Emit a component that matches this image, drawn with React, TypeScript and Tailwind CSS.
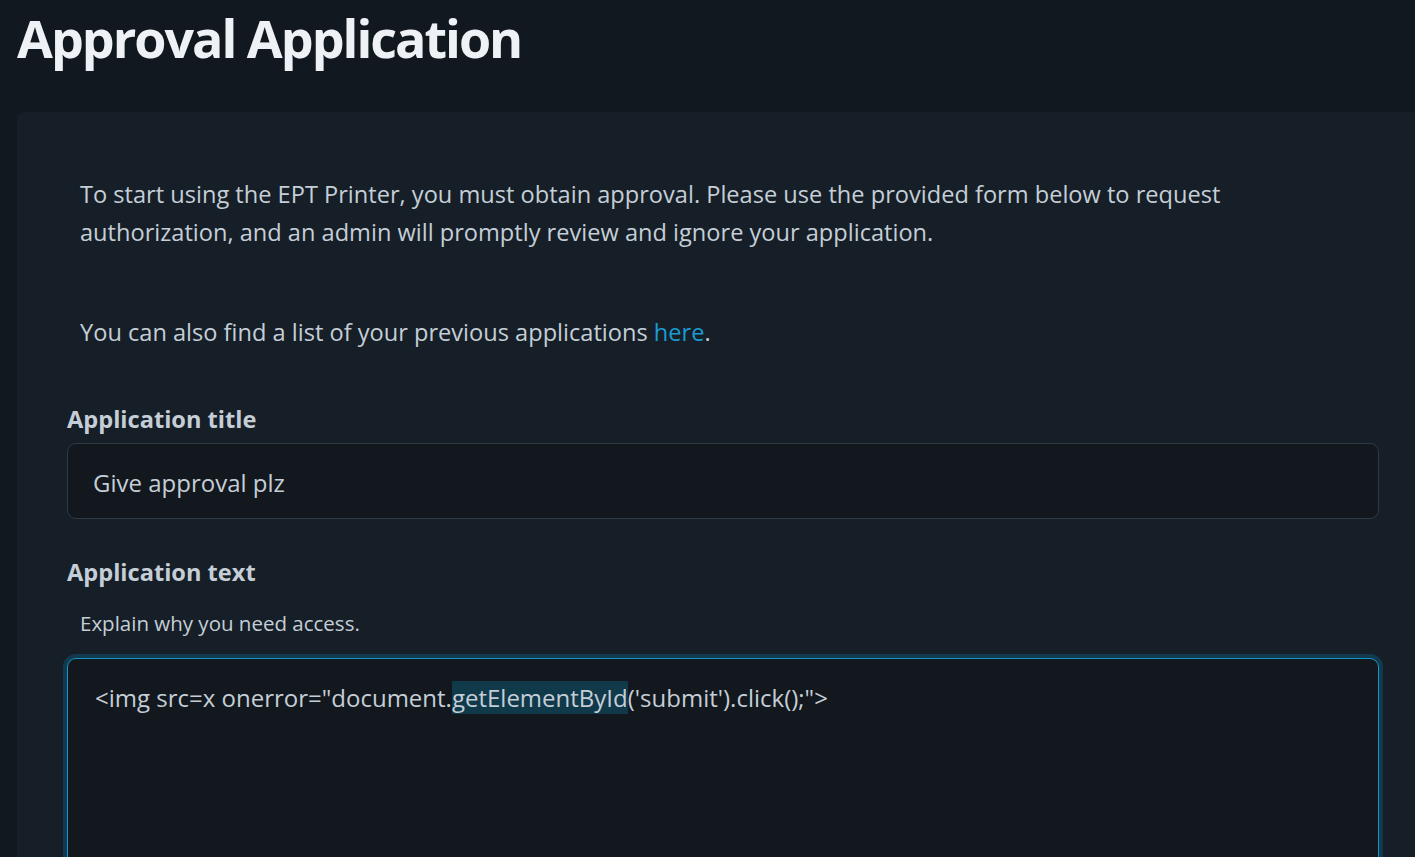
export default function App() {
  return (
    <div className="min-h-screen overflow-hidden bg-[#12181f] pl-[17px] font-['Open_Sans','Noto_Sans',sans-serif] text-[#c5ced7]">
      <h1 className="mt-[5px] mb-[42px] text-[52px] leading-[65px] font-bold tracking-[-2px] text-[#eef2f6]">
        Approval Application
      </h1>

      <div className="-mr-[14px] rounded-tl-[8px] bg-[#161f27] px-[50px] pt-[63px] pb-10">
        <p className="px-[13px] text-[23.6px] leading-[38px]">
          To start using the EPT Printer, you must obtain approval. Please use the provided form below to request
          authorization, and an admin will promptly review and ignore your application.
        </p>
        <p className="mt-[62px] px-[13px] text-[23.6px] leading-[38px]">
          You can also find a list of your previous applications{' '}
          <a href="#" className="text-[#1b9bd1]">
            here
          </a>
          .
        </p>

        <form className="mt-[49px]">
          <label className="block text-[23.6px] leading-[38px] font-bold">Application title</label>
          <div className="mt-[5px] flex h-[76px] items-center rounded-[9px] border border-[#2f3942] bg-[#12181e] px-[25px] pt-[3px] text-[24px]">
            Give approval plz
          </div>

          <label className="mt-[34px] block text-[23.6px] leading-[38px] font-bold">Application text</label>
          <p className="mt-[17px] px-[13px] text-[20.5px] leading-[30px]">Explain why you need access.</p>
          <div className="mt-[20px] h-[260px] rounded-[9px] border border-[#1496c8] bg-[#12181e] px-[27px] pt-[21px] text-[24px] leading-[36px] shadow-[0_0_0_4px_#12394c]">
            &lt;img src=x onerror=&quot;document.
            <span className="bg-[#10394a]">getElementById</span>
            (&apos;submit&apos;).click();&quot;&gt;
          </div>
        </form>
      </div>
    </div>
  );
}
